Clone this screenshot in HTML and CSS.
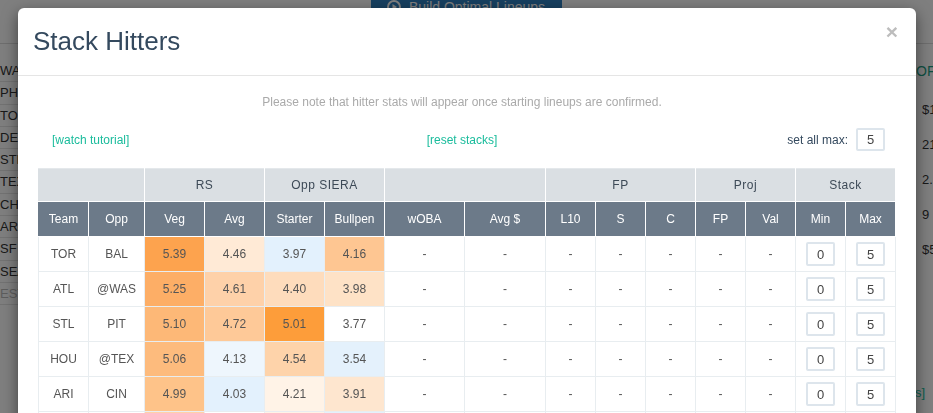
FILE: index.html
```html
<!DOCTYPE html>
<html lang="en">
<head>
    <meta charset="UTF-8">
    <meta name="viewport" content="width=device-width, initial-scale=1.0">
    <title>Stack Hitters</title>
    <link rel="stylesheet" href="styles.css">
</head>
<body>
    <!-- page behind the modal -->
    <div class="page">
        <div class="toolbar">
            <span class="build-btn">
                <svg class="play" width="14" height="14" viewBox="0 0 14 14">
                    <circle cx="7" cy="7" r="6" fill="none" stroke="#fff" stroke-width="2"/>
                    <path d="M5.5 4 L10 7 L5.5 10 Z" fill="#fff"/>
                </svg>
                Build Optimal Lineups
            </span>
        </div>
        <div class="page-main">
            <ul class="team-list">
                <li>WAS</li>
                <li>PHI</li>
                <li>TOR</li>
                <li>DET</li>
                <li>STL</li>
                <li>TEX</li>
                <li>CHC</li>
                <li>ARI</li>
                <li>SF</li>
                <li>SEA</li>
                <li class="muted">EST</li>
            </ul>
            <div class="side-stats">
                <div class="side-head">OF</div>
                <div class="side-val">$11,200</div>
                <div class="side-val">21.4</div>
                <div class="side-val">2.3</div>
                <div class="side-val">9</div>
                <div class="side-val">$5,600</div>
                <div class="side-link"><span>[view stacks]</span></div>
            </div>
        </div>
    </div>

    <div class="backdrop"></div>

    <div class="modal">
        <div class="modal-header">
            <h4 class="modal-title">Stack Hitters</h4>
            <span class="close">&times;</span>
        </div>
        <div class="modal-body">
            <div class="intro">
                <p class="note">Please note that hitter stats will appear once starting lineups are confirmed.</p>
                <div class="links-row">
                    <a class="tutorial" href="#tutorial">[watch tutorial]</a>
                    <a href="#reset">[reset stacks]</a>
                    <div class="set-max">
                        <label for="setAllMax">set all max:</label>
                        <input class="num-box" id="setAllMax" type="text" value="5">
                    </div>
                </div>
            </div>

            <table class="stack-table">
                <colgroup>
                    <col style="width: 50px">
                    <col style="width: 56px">
                    <col style="width: 60px">
                    <col style="width: 60px">
                    <col style="width: 60px">
                    <col style="width: 60px">
                    <col style="width: 80px">
                    <col style="width: 81px">
                    <col style="width: 50px">
                    <col style="width: 50px">
                    <col style="width: 50px">
                    <col style="width: 50px">
                    <col style="width: 50px">
                    <col style="width: 50px">
                    <col style="width: 50px">
                </colgroup>
                <thead>
                    <tr class="group">
                        <th colspan="2"></th>
                        <th colspan="2">RS</th>
                        <th colspan="2">Opp SIERA</th>
                        <th colspan="2"></th>
                        <th colspan="3">FP</th>
                        <th colspan="2">Proj</th>
                        <th colspan="2">Stack</th>
                    </tr>
                    <tr class="cols">
                        <th>Team</th>
                        <th>Opp</th>
                        <th>Veg</th>
                        <th>Avg</th>
                        <th>Starter</th>
                        <th>Bullpen</th>
                        <th>wOBA</th>
                        <th>Avg $</th>
                        <th>L10</th>
                        <th>S</th>
                        <th>C</th>
                        <th>FP</th>
                        <th>Val</th>
                        <th>Min</th>
                        <th>Max</th>
                    </tr>
                </thead>
                <tbody>
                    <tr>
                        <td>TOR</td>
                        <td>BAL</td>
                        <td style="background-color: #fda34e">5.39</td>
                        <td style="background-color: #ffead6">4.46</td>
                        <td style="background-color: #e3f1fd">3.97</td>
                        <td style="background-color: #fec692">4.16</td>
                        <td>-</td><td>-</td><td>-</td><td>-</td><td>-</td><td>-</td><td>-</td>
                        <td><input class="num-box" type="text" value="0"></td>
                        <td><input class="num-box" type="text" value="5"></td>
                    </tr>
                    <tr>
                        <td>ATL</td>
                        <td>@WAS</td>
                        <td style="background-color: #fdae66">5.25</td>
                        <td style="background-color: #fed1a9">4.61</td>
                        <td style="background-color: #fedcbc">4.40</td>
                        <td style="background-color: #fee2c6">3.98</td>
                        <td>-</td><td>-</td><td>-</td><td>-</td><td>-</td><td>-</td><td>-</td>
                        <td><input class="num-box" type="text" value="0"></td>
                        <td><input class="num-box" type="text" value="5"></td>
                    </tr>
                    <tr>
                        <td>STL</td>
                        <td>PIT</td>
                        <td style="background-color: #fdb877">5.10</td>
                        <td style="background-color: #fec998">4.72</td>
                        <td style="background-color: #fd9d3a">5.01</td>
                        <td style="background-color: #ffffff">3.77</td>
                        <td>-</td><td>-</td><td>-</td><td>-</td><td>-</td><td>-</td><td>-</td>
                        <td><input class="num-box" type="text" value="0"></td>
                        <td><input class="num-box" type="text" value="5"></td>
                    </tr>
                    <tr>
                        <td>HOU</td>
                        <td>@TEX</td>
                        <td style="background-color: #fdbb7d">5.06</td>
                        <td style="background-color: #eef6fd">4.13</td>
                        <td style="background-color: #fed3aa">4.54</td>
                        <td style="background-color: #e4f1fc">3.54</td>
                        <td>-</td><td>-</td><td>-</td><td>-</td><td>-</td><td>-</td><td>-</td>
                        <td><input class="num-box" type="text" value="0"></td>
                        <td><input class="num-box" type="text" value="5"></td>
                    </tr>
                    <tr>
                        <td>ARI</td>
                        <td>CIN</td>
                        <td style="background-color: #fec389">4.99</td>
                        <td style="background-color: #e3f1fd">4.03</td>
                        <td style="background-color: #fff3e7">4.21</td>
                        <td style="background-color: #fee6cf">3.91</td>
                        <td>-</td><td>-</td><td>-</td><td>-</td><td>-</td><td>-</td><td>-</td>
                        <td><input class="num-box" type="text" value="0"></td>
                        <td><input class="num-box" type="text" value="5"></td>
                    </tr>
                    <tr>
                        <td>NYY</td>
                        <td>BOS</td>
                        <td style="background-color: #fed1a9">4.95</td>
                        <td style="background-color: #ffffff">4.30</td>
                        <td style="background-color: #fff3e7">4.22</td>
                        <td style="background-color: #e4f1fc">3.60</td>
                        <td>-</td><td>-</td><td>-</td><td>-</td><td>-</td><td>-</td><td>-</td>
                        <td><input class="num-box" type="text" value="0"></td>
                        <td><input class="num-box" type="text" value="5"></td>
                    </tr>
                </tbody>
            </table>
        </div>
    </div>
</body>
</html>
```

FILE: styles.css
```css
body {
    margin: 0;
    height: 413px;
    overflow: hidden;
    font-family: "Liberation Sans", Arial, sans-serif;
    background-color: #fff;
    color: #333;
}

/* page behind the modal */
.toolbar {
    height: 43px;
    border-bottom: 1px solid #ddd;
    text-align: center;
}
.build-btn {
    display: inline-flex;
    align-items: center;
    gap: 8px;
    margin-top: -24px;
    padding: 10px 17px 3px 16px;
    background-color: #2f80c0;
    color: #fff;
    font-size: 14px;
    line-height: 18px;
}
.page-main {
    display: flex;
    justify-content: space-between;
    padding-top: 16px;
}
.team-list {
    list-style: none;
    margin: 0;
    padding: 0;
    width: 200px;
    font-size: 13px;
}
.team-list li {
    line-height: 21.3px;
    border-bottom: 1px solid #e4e4e4;
}
.team-list .muted {
    color: #bbb;
}
.side-stats {
    width: 17px;
    font-size: 13px;
}
.side-head {
    line-height: 22px;
    color: #1a9e84;
    font-size: 14px;
}
.side-val {
    padding-left: 6px;
    line-height: 35px;
    white-space: nowrap;
}
.side-head + .side-val {
    margin-top: 10px;
}
.side-link {
    display: flex;
    justify-content: flex-end;
    margin-top: 117px;
    padding-right: 8px;
    line-height: 17px;
    white-space: nowrap;
    color: #1abc9c;
}

.backdrop {
    position: fixed;
    top: 0;
    left: 0;
    right: 0;
    bottom: 0;
    background-color: rgba(0, 0, 0, 0.5);
}

/* modal */
.modal {
    position: absolute;
    top: 8px;
    left: 18px;
    width: 898px;
    height: 460px;
    background-color: #fff;
    border-radius: 6px;
    box-shadow: 0 5px 15px rgba(0, 0, 0, 0.5);
}
.modal-header {
    display: flex;
    justify-content: space-between;
    align-items: flex-start;
    padding: 15px;
    border-bottom: 1px solid #e5e5e5;
}
.modal-title {
    margin: 0;
    font-size: 26px;
    font-weight: normal;
    line-height: 37px;
    color: #34495e;
}
.close {
    margin-top: -2px;
    margin-right: 3px;
    font-size: 21px;
    font-weight: bold;
    line-height: 21px;
    color: #bdbdbd;
    cursor: pointer;
}
.modal-body {
    padding: 15px 20px;
}
.intro {
    margin-right: 10px;
}
.note {
    margin: 3px 0 0 0;
    text-align: center;
    font-size: 12px;
    line-height: 17px;
    color: #aaa;
}
.links-row {
    display: grid;
    grid-template-columns: 1fr auto 1fr;
    align-items: center;
    margin-top: 17px;
    font-size: 12px;
}
.links-row a {
    color: #1abc9c;
    text-decoration: none;
}
.links-row .tutorial {
    padding-left: 14px;
}
.set-max {
    display: flex;
    justify-content: flex-end;
    align-items: center;
    gap: 8px;
    padding-right: 1px;
    color: #34495e;
}
.num-box {
    box-sizing: border-box;
    width: 29px;
    height: 23px;
    padding: 0;
    border: 2px solid #dde5ec;
    border-radius: 2px;
    text-align: center;
    font-family: "Liberation Sans", Arial, sans-serif;
    font-size: 13px;
    color: #444;
    background-color: #fff;
}

/* stack table */
.stack-table {
    margin-top: 17px;
    width: 858px;
    table-layout: fixed;
    border-collapse: collapse;
    font-size: 12px;
}
.stack-table th {
    padding: 0;
    font-weight: normal;
    text-align: center;
    border: 1px solid #fff;
}
.stack-table .group th {
    height: 32px;
    background-color: #dadfe3;
    color: #3d4a57;
    letter-spacing: 0.5px;
    border-top-color: #e4e8eb;
}
.stack-table .group th:first-child {
    border-left-color: #dadfe3;
}
.stack-table .cols th {
    height: 34px;
    background-color: #6c7a89;
    color: #fff;
}
.stack-table .cols th:first-child {
    border-left-color: #6c7a89;
}
.stack-table td {
    height: 34px;
    padding: 0;
    text-align: center;
    color: #555;
    border: 1px solid #e8edf0;
}
.stack-table td .num-box {
    height: 24px;
    vertical-align: middle;
}
```
